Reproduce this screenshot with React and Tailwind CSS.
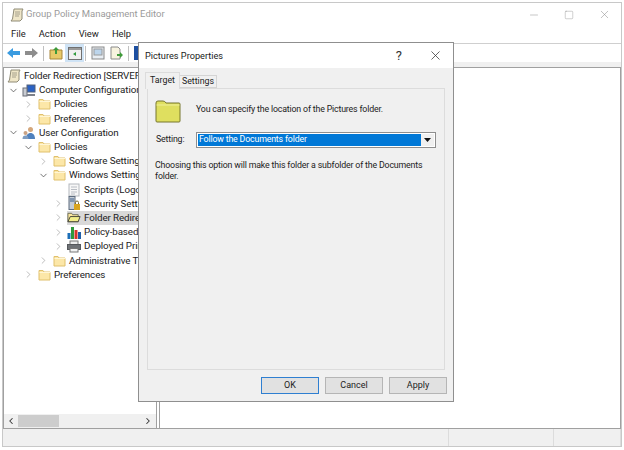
import { ChevronDown, ChevronRight, Minus, Square, X } from 'lucide-react'

const indents = { 0: 'pl-[3px]', 1: 'pl-[4px]', 2: 'pl-[19px]', 3: 'pl-[34px]', 4: 'pl-[49px]' }

function FolderSmall() {
  return (
    <svg width="13" height="12" viewBox="0 0 13 12">
      <path d="M1 1.5h4l1 1.5h6v8H1z" fill="#fce7a8" stroke="#e0c06c" />
      <path d="M1.5 3.500h11" stroke="#fff6d6" />
    </svg>
  )
}

function BookIcon() {
  return (
    <svg width="14" height="14" viewBox="0 0 14 14">
      <path d="M4 1h9l-1 2v8l-2 2H1l1.500-2z" fill="#efe6c8" stroke="#8f8b77" />
      <path d="M5 4h5M5 6h5M5 8h4" stroke="#a5a08c" />
    </svg>
  )
}

function ComputerIcon() {
  return (
    <svg width="14" height="13" viewBox="0 0 14 13">
      <rect x="5" y="1" width="8" height="7" fill="#2b62c4" stroke="#51607c" />
      <rect x="1" y="4" width="4" height="8" fill="#c9ccd2" stroke="#6a6e78" />
      <path d="M5 11h8" stroke="#7d818a" strokeWidth="2" />
    </svg>
  )
}

function UsersIcon() {
  return (
    <svg width="14" height="14" viewBox="0 0 14 14">
      <circle cx="8.500" cy="3.500" r="2.500" fill="#d4a77c" />
      <path d="M4 13c0-4 2-6 4.500-6s4.500 2 4.500 6z" fill="#4f81bd" />
      <circle cx="3.500" cy="7" r="2" fill="#c9a283" />
      <path d="M0.500 13c0-2.500 1-3.500 3-3.500s3 1 3 3.500z" fill="#7d9cc0" />
    </svg>
  )
}

function ScriptIcon() {
  return (
    <svg width="12" height="14" viewBox="0 0 12 14">
      <rect x="1" y="1" width="10" height="12" fill="#f7f7f7" stroke="#b4b8bd" />
      <path d="M3 4h6M3 6.500h6M3 9h6M3 11h4" stroke="#b9bdc4" />
    </svg>
  )
}

function SecurityIcon() {
  return (
    <svg width="14" height="15" viewBox="0 0 14 15">
      <rect x="2" y="0.500" width="6" height="13" fill="#c4ccd6" stroke="#5f6d7f" />
      <path d="M3 3h4M3 5h4" stroke="#41638d" />
      <rect x="7" y="8" width="6" height="6" fill="#d9a520" />
      <path d="M8.500 8V6.500a1.500 1.500 0 0 1 3 0V8" fill="none" stroke="#7b6a33" />
    </svg>
  )
}

function OpenFolderIcon() {
  return (
    <svg width="15" height="13" viewBox="0 0 15 13">
      <path d="M1 2h4l1 1.500h6V11H1z" fill="#fbe79e" stroke="#6b6a55" />
      <path d="M1 11l2.500-5.500H14L12 11z" fill="#f2ee8a" stroke="#3f3f36" />
    </svg>
  )
}

function ChartIcon() {
  return (
    <svg width="14" height="14" viewBox="0 0 14 14">
      <rect x="0.500" y="8" width="3" height="6" fill="#1d6fb8" />
      <rect x="4" y="2" width="3" height="12" fill="#2f9a3c" />
      <rect x="7.500" y="5" width="3" height="9" fill="#d8352a" />
      <rect x="11" y="7" width="3" height="7" fill="#1f5fa8" />
    </svg>
  )
}

function PrinterIcon() {
  return (
    <svg width="14" height="13" viewBox="0 0 14 13">
      <rect x="3" y="1" width="8" height="4" fill="#eeeeee" stroke="#777" />
      <rect x="0.500" y="4.500" width="13" height="5" fill="#6f7276" stroke="#55585c" />
      <rect x="3" y="8.500" width="8" height="3.500" fill="#f3f3f3" stroke="#777" />
    </svg>
  )
}

const rows = [
  { level: 0, icon: <BookIcon />, label: 'Folder Redirection [SERVER.AD.LOCAL] Policy' },
  { level: 1, arrow: 'down', icon: <ComputerIcon />, label: 'Computer Configuration' },
  { level: 2, arrow: 'right', icon: <FolderSmall />, label: 'Policies' },
  { level: 2, arrow: 'right', icon: <FolderSmall />, label: 'Preferences' },
  { level: 1, arrow: 'down', icon: <UsersIcon />, label: 'User Configuration' },
  { level: 2, arrow: 'down', icon: <FolderSmall />, label: 'Policies' },
  { level: 3, arrow: 'right', icon: <FolderSmall />, label: 'Software Settings' },
  { level: 3, arrow: 'down', icon: <FolderSmall />, label: 'Windows Settings' },
  { level: 4, icon: <ScriptIcon />, label: 'Scripts (Logon/Logoff)' },
  { level: 4, arrow: 'right', icon: <SecurityIcon />, label: 'Security Settings' },
  { level: 4, arrow: 'right', icon: <OpenFolderIcon />, label: 'Folder Redirection', selected: true },
  { level: 4, arrow: 'right', icon: <ChartIcon />, label: 'Policy-based QoS' },
  { level: 4, arrow: 'right', icon: <PrinterIcon />, label: 'Deployed Printers' },
  { level: 3, arrow: 'right', icon: <FolderSmall />, label: 'Administrative Templates' },
  { level: 2, arrow: 'right', icon: <FolderSmall />, label: 'Preferences' },
]

function TreeRow({ row }) {
  return (
    <div className={`flex h-[14.2px] items-center whitespace-nowrap ${indents[row.level]}`}>
      {row.level > 0 && (
        <span className="flex w-[10px] shrink-0 items-center justify-center">
          {row.arrow === 'down' && <ChevronDown size={11} strokeWidth={1.6} className="shrink-0 text-[#444]" />}
          {row.arrow === 'right' && <ChevronRight size={11} strokeWidth={1.4} className="shrink-0 text-[#999]" />}
        </span>
      )}
      <span className={`flex h-full flex-1 items-center ${row.level === 0 ? '' : 'ml-[4px]'} ${row.selected ? 'bg-[#d9d9d9]' : ''}`}>
        <span className="flex w-[14px] shrink-0 items-center justify-center">{row.icon}</span>
        <span className="ml-[3px] leading-[14px] tracking-[-0.1px]">{row.label}</span>
      </span>
    </div>
  )
}

function DialogButton({ label, primary }) {
  return (
    <button className={`h-[17px] w-[58px] border bg-[#e1e1e1] text-[9px] leading-none text-[#222] ${primary ? 'border-[#2f7fd1]' : 'border-[#b5b5b5]'}`}>
      {label}
    </button>
  )
}

function PropertiesDialog() {
  return (
    <div className="absolute left-[138px] top-[42px] flex h-[360px] w-[316px] flex-col border border-[#8f8f8f] bg-[#f0f0f0] text-[#222]">
      <div className="flex h-[25px] shrink-0 items-center bg-white pl-[6px] text-[9.200px]">
        <span className="flex-1">Pictures Properties</span>
        <span className="mr-[26px] text-[13px] text-[#333]">?</span>
        <X size={15} strokeWidth={1.2} className="mr-[10px] text-[#333]" />
      </div>
      <div className="mt-[4px] flex h-[16px] shrink-0 items-end pl-[6px] text-[8.800px]">
        <div className="z-10 -mb-[1px] flex h-[17px] w-[35px] items-center justify-center border border-b-0 border-[#dcdcdc] bg-[#f0f0f0]">Target</div>
        <div className="flex h-[13px] w-[37px] items-center justify-center border border-l-0 border-[#d4d4d4] bg-[#f0f0f0]">Settings</div>
      </div>
      <div className="mx-[8px] h-[282px] shrink-0 border border-[#dcdcdc] bg-[#f0f0f0] pl-[7px] pr-[8px] pt-[11px] text-[8.800px] tracking-[-0.17px]">
        <div className="flex h-[23px] items-center">
          <svg width="26" height="23" viewBox="0 0 26 23" className="shrink-0">
            <path d="M1 3 Q1 1 3 1 H8 Q10 1 11 3 H24 Q25 3 25 4 V21 Q25 22 24 22 H2 Q1 22 1 21 Z" fill="#dfdf5f" stroke="#77772e" />
            <path d="M1.500 5 H24.500" stroke="#f0f09a" />
          </svg>
          <span className="-mt-[3px] ml-[15px] whitespace-nowrap">You can specify the location of the Pictures folder.</span>
        </div>
        <div className="mt-[9px] flex h-[16px] items-center">
          <span className="w-[41px] shrink-0 pl-[1px]">Setting:</span>
          <div className="flex h-[16px] w-[240px] items-stretch border border-[#8e8e8e] bg-white p-[1px]">
            <div className="flex flex-1 items-center bg-[#0078d7] pl-[1px] text-white">Follow the Documents folder</div>
            <div className="flex w-[13px] items-center justify-center bg-[#f0f0f0]">
              <svg width="7" height="4" viewBox="0 0 7 4"><path d="M0 0h7L3.500 4z" fill="#111" /></svg>
            </div>
          </div>
        </div>
        <p className="mt-[12px] w-[270px] leading-[10.500px]">Choosing this option will make this folder a subfolder of the Documents folder.</p>
      </div>
      <div className="mt-[7px] flex justify-end gap-[6px] pr-[6px]">
        <DialogButton label="OK" primary />
        <DialogButton label="Cancel" />
        <DialogButton label="Apply" />
      </div>
    </div>
  )
}

export default function App() {
  return (
    <div className="relative h-[450px] w-[624px] overflow-hidden bg-white font-['Roboto','Open_Sans',sans-serif] text-[9.800px] text-[#222]">
      <div className="mx-[2px] mt-[2px] flex h-[445px] flex-col border border-[#c8c8c8] bg-white">
        <div className="flex h-[23px] shrink-0 items-center pl-[7px]">
          <BookIcon />
          <span className="ml-[2px] text-[9.500px] text-[#9b9b9b]">Group Policy Management Editor</span>
          <div className="ml-auto flex items-center gap-[24px] pr-[10px] text-[#8d8d8d]">
            <Minus size={12} strokeWidth={1} />
            <Square size={10} strokeWidth={1} />
            <X size={13} strokeWidth={1} />
          </div>
        </div>
        <div className="flex h-[18px] shrink-0 items-center gap-[13px] border-b border-[#cfcfcf] pl-[8px] text-[9.400px]">
          <span>File</span>
          <span>Action</span>
          <span>View</span>
          <span>Help</span>
        </div>
        <div className="flex h-[18px] shrink-0 items-center bg-white pl-[3px]">
          <svg width="15" height="12" viewBox="0 0 15 12"><path d="M7 1 1 6l6 5V8h7V4H7z" fill="#3a9be0" /></svg>
          <svg width="15" height="12" viewBox="0 0 15 12" className="ml-[3px]"><path d="M8 1l6 5-6 5V8H1V4h7z" fill="#8d8d8d" /></svg>
          <span className="ml-[4px] h-[15px] w-px bg-[#c0c0c0]" />
          <svg width="14" height="14" viewBox="0 0 14 14" className="ml-[5px]"><path d="M1 4h12v9H1z" fill="#e8c968" stroke="#a8873a" /><path d="M7 1l3 3H8v4H6V4H4z" fill="#3f9a3a" /></svg>
          <span className="ml-[2px] flex h-[18px] w-[19px] items-center justify-center bg-[#cfe3f5]">
            <svg width="14" height="13" viewBox="0 0 14 13"><rect x="0.500" y="0.500" width="13" height="12" fill="#f0f0f0" stroke="#707070" /><rect x="1" y="1" width="12" height="2" fill="#9a9a9a" /><path d="M5 7l3-2v4z" fill="#2f9a3c" /></svg>
          </span>
          <span className="ml-[1px] h-[15px] w-px bg-[#c0c0c0]" />
          <svg width="14" height="14" viewBox="0 0 14 14" className="ml-[5px]"><rect x="1" y="1" width="12" height="12" fill="#e8eef4" stroke="#8a8a8a" /><rect x="3" y="3" width="8" height="6" fill="#bcd5ec" stroke="#9a9a9a" /></svg>
          <svg width="15" height="14" viewBox="0 0 15 14" className="ml-[4px]"><path d="M2 1h7l2 2v10H2z" fill="#f7f3df" stroke="#8a8a8a" /><path d="M8 8h3V6l3 3-3 3v-2H8z" fill="#3f9a3a" /></svg>
          <span className="ml-[4px] h-[15px] w-px bg-[#c0c0c0]" />
          <span className="ml-[5px] h-[14px] w-[4px] bg-[#1d4fa0]" />
        </div>
        <div className="h-[5px] shrink-0 bg-[#f0f0f0]" />
        <div className="flex min-h-0 flex-1 gap-[2px] border-b border-[#a0a0a0]">
          <div className="flex w-[154px] shrink-0 flex-col border-x border-t border-[#a0a0a0]">
            <div className="min-h-0 flex-1 overflow-hidden pt-[1px]">
              {rows.map((row, i) => (
                <TreeRow key={i} row={row} />
              ))}
            </div>
            <div className="flex h-[14px] shrink-0 items-center bg-[#f0f0f0]">
              <ChevronRight size={10} strokeWidth={2.500} className="ml-[2px] rotate-180 text-[#333]" />
              <span className="ml-[2px] h-[12px] w-[41px] bg-[#cdcdcd]" />
              <ChevronRight size={10} strokeWidth={2.500} className="ml-auto mr-[3px] text-[#333]" />
            </div>
          </div>
          <div className="flex-1 border-l border-r border-t border-[#a0a0a0] bg-white" />
        </div>
        <div className="flex h-[17px] shrink-0 justify-end bg-[#f0f0f0]">
          <span className="w-[105px] border-l border-[#dcdcdc]" />
          <span className="w-[68px] border-x border-[#dcdcdc]" />
        </div>
      </div>
      <PropertiesDialog />
    </div>
  )
}
